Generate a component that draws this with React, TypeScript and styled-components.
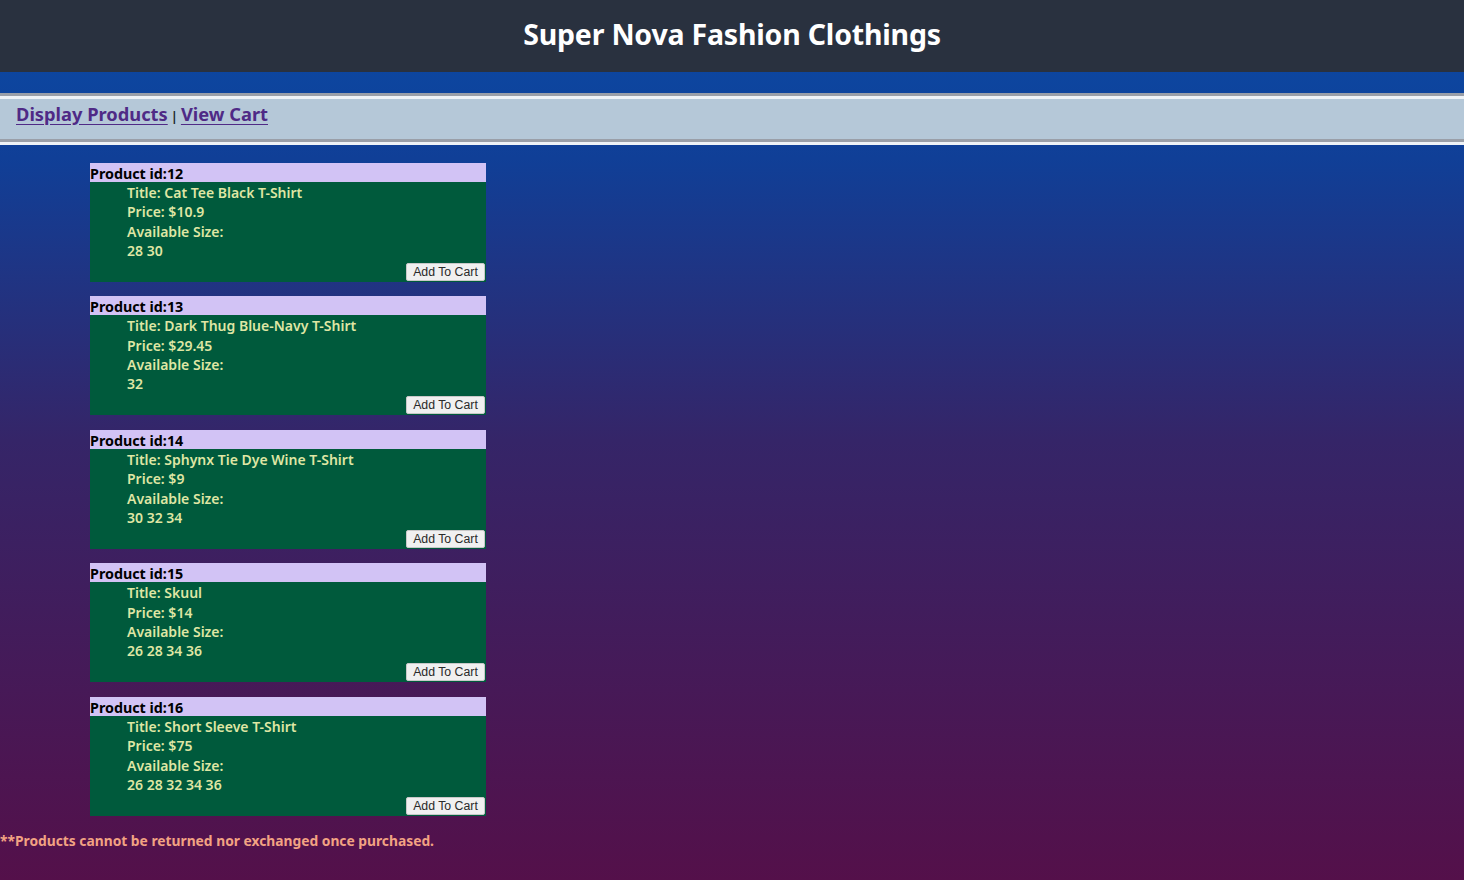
import React from "react";
import styled, { createGlobalStyle } from "styled-components";

const Global = createGlobalStyle`
  html, body { margin: 0; padding: 0; }
  body {
    min-height: 880px;
    background: linear-gradient(to bottom, #0a4ba6 0%, #103f97 18%, #352568 50%, #54104a 100%);
    font-family: "Noto Sans", "Open Sans", sans-serif;
  }
`;

const Page = styled.div`
  min-height: 880px;
  display: flex;
  flex-direction: column;
`;

const Header = styled.header`
  height: 72px;
  background: #29313f;
  display: flex;
  align-items: center;
  justify-content: center;
`;

const Title = styled.h1`
  margin: 0 0 4px 0;
  color: #ffffff;
  font-size: 28.5px;
  font-weight: 700;
  letter-spacing: -0.2px;
`;

const Nav = styled.nav`
  margin-top: 21px;
  height: 40px;
  background: #b5c8d8;
  border-top: 3px solid #9a9fa8;
  border-bottom: 3px solid #eef2f6;
  box-shadow: inset 0 3px 0 #eef2f6, inset 0 -3px 0 #9a9fa8;
  padding: 3px 16px;
  display: flex;
  align-items: center;
  gap: 3px;
  box-sizing: content-box;
`;

const NavLink = styled.a`
  color: #4f2a86;
  font-size: 18.3px;
  font-weight: 700;
  text-decoration: underline;
  text-underline-offset: 3px;
  margin-top: -11px;
  cursor: pointer;
`;

const Sep = styled.span`
  color: #1c2a2a;
  font-size: 13px;
  font-weight: 700;
  margin-top: -6px;
`;

const List = styled.main`
  padding: 18px 0 0 90px;
  display: flex;
  flex-direction: column;
  gap: 14.5px;
`;

const Card = styled.section`
  width: 396px;
`;

const CardHead = styled.div`
  height: 19px;
  background: #d2c3f5;
  color: #000;
  font-size: 14.3px;
  font-weight: 700;
  line-height: 19px;
  padding-top: 1px;
  box-sizing: border-box;
`;

const CardBody = styled.div`
  background: #005a3c;
  padding: 0 1px 1px 37px;
  display: flex;
  flex-direction: column;
`;

const Line = styled.div`
  color: #dfe6a4;
  font-size: 14px;
  font-weight: 600;
  line-height: 19.3px;
  &:first-child {
    margin-top: 1px;
  }
`;

const Actions = styled.div`
  display: flex;
  justify-content: flex-end;
  margin-top: 2.8px;
`;

const Button = styled.button`
  font-family: "Liberation Sans", Arial, sans-serif;
  font-size: 12.3px;
  height: 18px;
  width: 79px;
  padding: 0;
  background: #f0f0f0;
  color: #2a2a2a;
  border: 1px solid #c8c8c8;
  border-radius: 2px;
  line-height: 16px;
`;

const Note = styled.p`
  margin: 15px 0 0 0;
  color: #f2a383;
  font-size: 13.8px;
  font-weight: 700;
`;

const products = [
  { id: 12, title: "Cat Tee Black T-Shirt", price: "10.9", sizes: "28 30" },
  { id: 13, title: "Dark Thug Blue-Navy T-Shirt", price: "29.45", sizes: "32" },
  { id: 14, title: "Sphynx Tie Dye Wine T-Shirt", price: "9", sizes: "30 32 34" },
  { id: 15, title: "Skuul", price: "14", sizes: "26 28 34 36" },
  { id: 16, title: "Short Sleeve T-Shirt", price: "75", sizes: "26 28 32 34 36" },
];

export default function App() {
  return (
    <Page>
      <Global />
      <Header>
        <Title>Super Nova Fashion Clothings</Title>
      </Header>
      <Nav>
        <NavLink>Display Products</NavLink>
        <Sep>|</Sep>
        <NavLink>View Cart</NavLink>
      </Nav>
      <List>
        {products.map((p) => (
          <Card key={p.id}>
            <CardHead>Product id:{p.id}</CardHead>
            <CardBody>
              <Line>Title: {p.title}</Line>
              <Line>Price: ${p.price}</Line>
              <Line>Available Size:</Line>
              <Line>{p.sizes}</Line>
              <Actions>
                <Button>Add To Cart</Button>
              </Actions>
            </CardBody>
          </Card>
        ))}
      </List>
      <Note>**Products cannot be returned nor exchanged once purchased.</Note>
    </Page>
  );
}
